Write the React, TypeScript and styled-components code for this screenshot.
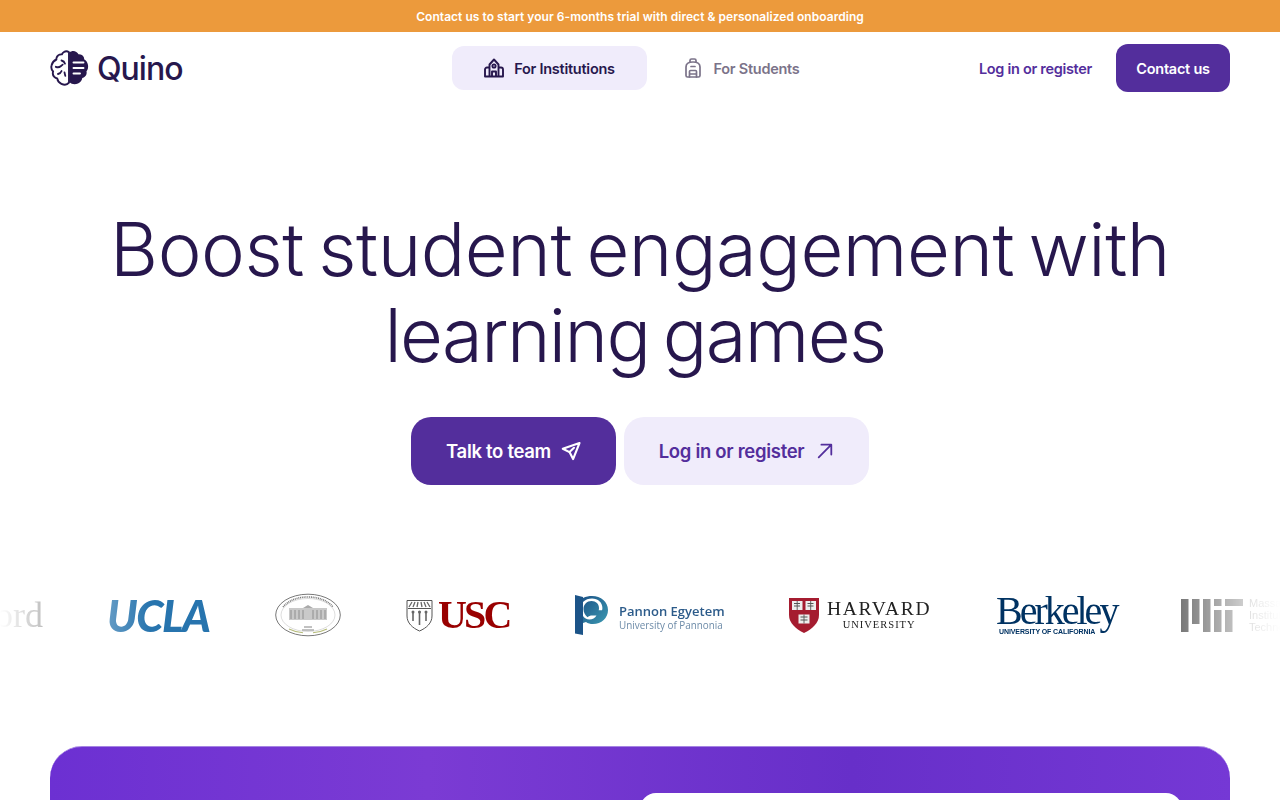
import React from "react";
import styled, { createGlobalStyle } from "styled-components";

const Global = createGlobalStyle`
  html, body { margin: 0; padding: 0; background: #fff; }
  body { font-family: "Inter", "Liberation Sans", sans-serif; }
  #root { height: 800px; overflow: hidden; }
`;

const Page = styled.div`
  width: 1280px;
  height: 800px;
  overflow: hidden;
  display: flex;
  flex-direction: column;
`;

const Banner = styled.div`
  height: 32px;
  flex: none;
  background: #ec9a3c;
  color: #fff;
  font-size: 12px;
  font-weight: 600;
  display: flex;
  align-items: center;
  justify-content: center;
  letter-spacing: 0.04px;
`;

const Nav = styled.nav`
  height: 72px;
  flex: none;
  padding: 0 50px;
  display: grid;
  grid-template-columns: 402px auto 1fr;
  align-items: center;
`;

const Brand = styled.div`
  display: flex;
  align-items: center;
  gap: 8px;
  color: #27174d;
  font-size: 32px;
  font-weight: 500;
  letter-spacing: -1px;
`;

const Tabs = styled.div`
  display: flex;
  margin-top: -1px;
`;

const Tab = styled.div<{ $active?: boolean }>`
  flex: none;
  width: ${(p) => (p.$active ? "195px" : "191px")};
  height: 44px;
  border-radius: 12px;
  display: flex;
  align-items: center;
  justify-content: center;
  gap: ${(p) => (p.$active ? "10px" : "12px")};
  padding-top: 1px;
  box-sizing: border-box;
  font-size: 14.5px;
  font-weight: 600;
  letter-spacing: -0.25px;
  background: ${(p) => (p.$active ? "#f0ecfb" : "transparent")};
  color: ${(p) => (p.$active ? "#27174d" : "#7b7389")};
`;

const NavRight = styled.div`
  display: flex;
  justify-content: flex-end;
  align-items: center;
  gap: 24px;
`;

const NavLink = styled.span`
  color: #532e9c;
  font-size: 14.5px;
  font-weight: 600;
  letter-spacing: -0.3px;
`;

const NavButton = styled.div`
  width: 114px;
  height: 48px;
  border-radius: 12px;
  background: #532e9c;
  color: #fff;
  font-size: 14.5px;
  font-weight: 600;
  letter-spacing: -0.25px;
  display: flex;
  align-items: center;
  justify-content: center;
`;

const Hero = styled.section`
  display: flex;
  flex-direction: column;
  align-items: center;
  padding-top: 102px;
`;

const Heading = styled.h1`
  margin: 0;
  width: 1180px;
  text-align: center;
  font-size: 74px;
  line-height: 86px;
  font-weight: 300;
  word-spacing: -6px;
  color: #27174d;
`;

const HeadingLine = styled.span<{ $tracking: number; $inset?: number }>`
  display: block;
  letter-spacing: ${(p) => p.$tracking}px;
  padding-right: ${(p) => p.$inset ?? 0}px;
`;

const Actions = styled.div`
  display: flex;
  gap: 8px;
  margin-top: 39px;
`;

const Action = styled.div<{ $primary?: boolean }>`
  height: 68px;
  width: ${(p) => (p.$primary ? "205px" : "245px")};
  border-radius: 20px;
  display: flex;
  align-items: center;
  justify-content: center;
  gap: ${(p) => (p.$primary ? "10px" : "12px")};
  font-size: 18.5px;
  font-weight: 600;
  letter-spacing: -0.3px;
  background: ${(p) => (p.$primary ? "#532e9c" : "#f0ecfb")};
  color: ${(p) => (p.$primary ? "#fff" : "#532e9c")};
`;

const LogoBand = styled.div`
  margin-top: 100px;
  height: 60px;
  flex: none;
  overflow: hidden;
  display: flex;
  align-items: center;
  -webkit-mask-image: linear-gradient(to right, transparent 0, #000 150px, #000 1130px, transparent 1280px);
  mask-image: linear-gradient(to right, transparent 0, #000 150px, #000 1130px, transparent 1280px);
`;

const LogoTrack = styled.div`
  display: flex;
  align-items: center;
  gap: 65px;
  margin-left: -97px;
  flex: none;
`;

const Logo = styled.div<{ $w: number }>`
  width: ${(p) => p.$w}px;
  flex: none;
  display: flex;
  align-items: center;
  white-space: nowrap;
  svg {
    flex: none;
  }
`;

const Stanford = styled.span`
  font-family: "Liberation Serif", serif;
  font-size: 36px;
  color: #222;
  width: 100%;
  text-align: right;
`;

const Ucla = styled.span`
  font-family: "Lato", sans-serif;
  font-size: 44px;
  font-weight: 900;
  font-style: italic;
  letter-spacing: -1.4px;
  color: #2774ae;
  line-height: 1;
  margin-left: -1px;
`;

const Usc = styled.span`
  font-family: "Liberation Serif", serif;
  font-size: 40px;
  font-weight: 700;
  letter-spacing: -2.8px;
  color: #990000;
  margin-left: 5px;
  line-height: 1;
`;

const PannonText = styled.div`
  display: flex;
  flex-direction: column;
  margin-left: 10px;
  margin-top: 6px;
  font-family: "Open Sans", sans-serif;
  line-height: 14px;
`;

const PannonName = styled.span`
  font-size: 13px;
  font-weight: 600;
  color: #2c5b8a;
`;

const PannonSub = styled.span`
  font-size: 9.9px;
  color: #6d8ba8;
`;

const HarvardText = styled.div`
  display: flex;
  flex-direction: column;
  align-items: center;
  margin-left: 8px;
  font-family: "Liberation Serif", serif;
  color: #222;
`;

const HarvardName = styled.span`
  font-size: 19.5px;
  line-height: 20px;
  letter-spacing: 1.7px;
`;

const HarvardSub = styled.span`
  font-size: 10.5px;
  line-height: 12px;
  letter-spacing: 1px;
`;

const BerkeleyStack = styled.div`
  display: flex;
  flex-direction: column;
  color: #003262;
`;

const BerkeleyName = styled.span`
  font-family: "Liberation Serif", serif;
  font-size: 40px;
  line-height: 32px;
  letter-spacing: -3px;
`;

const BerkeleySub = styled.span`
  font-family: "Liberation Sans", sans-serif;
  font-size: 7px;
  font-weight: 700;
  line-height: 9px;
  letter-spacing: -0.1px;
  margin-left: 3px;
`;

const MitText = styled.div`
  display: flex;
  flex-direction: column;
  margin-left: 6px;
  font-family: "Liberation Sans", sans-serif;
  font-size: 11px;
  line-height: 12px;
  color: #666;
`;

const Showcase = styled.section`
  margin: 101px 50px 0;
  flex: none;
  height: 300px;
  border-radius: 32px 32px 0 0;
  background: linear-gradient(90deg, #6c30d2 0%, #7b3bd4 32%, #672fc9 68%, #7538d5 100%);
  border-top: 1px solid #a584e2;
  display: flex;
  justify-content: flex-end;
  padding: 46px 48px 0 0;
`;

const ShowcasePanel = styled.div`
  width: 542px;
  height: 200px;
  background: #fff;
  border-radius: 16px;
`;

const BrainLogo = () => (
  <svg width="39" height="37" viewBox="0 0 39 37" fill="none">
    <path
      d="M19 2.200c-1.400-1-3.400-1.200-5-.2-1 .6-1.700 1.400-2.100 2.400-2.300-.2-4.400 1-5.200 3-.3.700-.4 1.400-.3 2.100C4 10.500 2.200 12.900 1.600 15.300c-.7 2.500 0 4.700 1.500 6.200-.6 2-.2 4 1.200 5.400.9.900 1.800 1.300 2.900 1.500.3 2.200 1.700 4.300 4.200 5.500 2.800 1.300 5.900.9 7.600-1.200V2.200Z"
      stroke="#27174d"
      strokeWidth="1.900"
      strokeLinejoin="round"
    />
    <path d="M11.500 10.500c1.800.4 3 1.500 3.500 3.200M5.800 16.800c2 .8 3.500.6 4.900-.6l2-1.600M8 24c1.800-.4 3-1.400 3.600-3M14.500 22.500l.8 3.400" stroke="#27174d" strokeWidth="1.800" strokeLinecap="round" />
    <path
      d="M19.500 2.500c1.600-1.500 4.700-2 6.800-.5 1 .7 1.600 1.200 2.100 2.200 2.500-.2 4.600 1 5.400 3 .3.700.4 1.400.3 2.100 2 1.100 3.500 3.300 3.900 5.700.4 2.500-.1 4.600-1.500 6.300.5 2-.1 4-1.500 5.300-.8.800-1.700 1.200-2.700 1.400-.4 2.300-1.800 4.400-4.300 5.500-2.800 1.300-6.500.9-8.500-1.200V2.500Z"
      fill="#27174d"
    />
    <path d="M23.500 12.500h10M23.500 18h10M23.500 23.500h6.500" stroke="#fff" strokeWidth="1.900" strokeLinecap="round" />
  </svg>
);

const SchoolIcon = () => (
  <svg width="20" height="20" viewBox="0 0 20 20" fill="none" stroke="currentColor" strokeWidth="1.900" strokeLinejoin="round">
    <path d="M5.500 18.500V6.500L10 1.500l4.500 5v12" />
    <path d="M5.500 9.500H3A2 2 0 0 0 1 11.500v7h18v-7a2 2 0 0 0-2-2h-2.500" />
    <circle cx="10" cy="8" r="1.600" />
    <path d="M8 18.500v-5h4v5" />
  </svg>
);

const BackpackIcon = () => (
  <svg width="16" height="20" viewBox="0 0 16 20" fill="none" stroke="currentColor" strokeWidth="1.700" strokeLinejoin="round" strokeLinecap="round">
    <path d="M1 9c0-3 2-5 7-5s7 2 7 5v8.500a1.500 1.500 0 0 1-1.500 1.500h-11A1.500 1.500 0 0 1 1 17.500V9Z" />
    <path d="M5 4V2.500A1.500 1.500 0 0 1 6.500 1h3A1.500 1.500 0 0 1 11 2.500V4" />
    <path d="M4.500 19v-5.500a1 1 0 0 1 1-1h5a1 1 0 0 1 1 1V19M4.500 16h7M6 8.500h4" />
  </svg>
);

const SendIcon = () => (
  <svg width="20" height="20" viewBox="0 0 20 20" fill="none" stroke="currentColor" strokeWidth="2.100" strokeLinejoin="round" strokeLinecap="round">
    <path d="M18.500 2 1.800 7.800l6.700 3.300 3.600 7L18.500 2Z" />
    <path d="M8.500 11.100 13 6.800" />
  </svg>
);

const ArrowIcon = () => (
  <svg width="18" height="18" viewBox="0 0 20 20" fill="none" stroke="currentColor" strokeWidth="2" strokeLinecap="round" strokeLinejoin="round">
    <path d="M3 17 17 3M6 3h11v11" />
  </svg>
);

const SealLogo = () => (
  <svg width="66" height="44" viewBox="0 0 66 44" fill="none">
    <ellipse cx="33" cy="22" rx="32.300" ry="20.800" fill="#fff" stroke="#555" strokeWidth="0.800" />
    <ellipse cx="33" cy="22" rx="27" ry="16.500" stroke="#bbb" strokeWidth="0.500" />
    <path d="M8 14c6-7 15-10 25-10s19 3 25 10" stroke="#777" strokeWidth="1.600" strokeDasharray="1 .8" />
    <path d="M14 15h38v12H14z" fill="#c9c9c9" />
    <path d="M16 17v9M20 17v9M24 17v9M28 17v9M38 17v9M42 17v9M46 17v9M50 17v9" stroke="#8e8e8e" strokeWidth="1" />
    <path d="M28 15l5-3 5 3z" fill="#aaa" />
    <path d="M14 36c5 2.500 10 3.500 14 3.800M52 36c-5 2.500-10 3.500-14 3.800" stroke="#b5bb7a" strokeWidth="1.100" />
    <path d="M29 34h8M27 37h12" stroke="#777" strokeWidth="0.900" />
  </svg>
);

const UscShield = () => (
  <svg width="27" height="33" viewBox="0 0 27 33" fill="none">
    <path d="M1 1.500h25v15.500c0 7-5.500 12-12.500 15C6.500 29 1 24 1 17V1.500Z" fill="#fff" stroke="#555" strokeWidth="1" />
    <path d="M2 9.500h23" stroke="#555" strokeWidth="1" />
    <path d="M3 8l3-5M7 8l2-5M11 8l1-5M16 8l-1-5M20 8l-2-5M24 8l-3-5" stroke="#666" strokeWidth="1.300" />
    <path d="M7 12v10M13.500 12v14M20 12v10" stroke="#666" strokeWidth="1.600" />
    <circle cx="7" cy="13" r="1.500" fill="#666" />
    <circle cx="13.500" cy="13" r="1.500" fill="#666" />
    <circle cx="20" cy="13" r="1.500" fill="#666" />
  </svg>
);

const PannonMark = () => (
  <svg width="35" height="40" viewBox="0 0 35 40" fill="none">
    <defs>
      <linearGradient id="pan" x1="0" y1="0" x2="1" y2="1">
        <stop offset="0" stopColor="#1c5488" />
        <stop offset="1" stopColor="#3c9ab2" />
      </linearGradient>
    </defs>
    <path d="M1 0l8 2v38l-8-1.500V0Z" fill="#1c5488" />
    <path d="M9 3C12 1.500 15 1 18 1c9 0 16 6 16 14s-6.500 14-15 14c-3 0-5-.6-7-2l-3 1v-7c1.500 2 3.500 3.500 6.500 3.500s5.500-1.500 7-4H18c-1.500 0-3.300.6-4.500 1.800C11 20 9.500 17.500 9.500 14c0-4.500 3.500-8 8-8s7.500 3 7.500 7c0 1-.1 1.500-.3 2.300h3.300c.3-.8.400-1.500.4-2.300C28.400 7.500 24 3.500 18 3.500c-3.500 0-6.500 1-9 3.500V3Z" fill="url(#pan)" />
  </svg>
);

const HarvardShield = () => (
  <svg width="30" height="35" viewBox="0 0 30 35" fill="none">
    <path d="M0 0h30v17c0 8-7 14-15 18C7 31 0 25 0 17V0Z" fill="#a51c30" />
    <path d="M3 3h10.500v9H3zM16.500 3H27v9H16.500zM9.500 16.500h11v9h-11z" fill="#eee" />
    <path d="M5 5.500h6M5 8h6M18.500 5.500h6M18.500 8h6M11.500 19h7M11.500 22h7" stroke="#555" strokeWidth="1.100" />
    <path d="M8.200 3v9M21.700 3v9M15 16.500v9" stroke="#555" strokeWidth="0.900" />
  </svg>
);

const MitMark = () => (
  <svg width="62" height="33" viewBox="0 0 62 33" fill="#333">
    <rect x="0" y="0" width="7.500" height="33" />
    <rect x="11" y="0" width="7.500" height="25" />
    <rect x="22" y="0" width="7.500" height="33" />
    <rect x="33" y="0" width="7.500" height="7" />
    <rect x="33" y="11" width="7.500" height="22" />
    <rect x="44" y="0" width="18" height="7" />
    <rect x="44" y="11" width="7.500" height="22" />
  </svg>
);

export default function App() {
  return (
    <Page>
      <Global />
      <Banner>Contact us to start your 6-months trial with direct &amp; personalized onboarding</Banner>
      <Nav>
        <Brand>
          <BrainLogo />
          Quino
        </Brand>
        <Tabs>
          <Tab $active>
            <SchoolIcon />
            For Institutions
          </Tab>
          <Tab>
            <BackpackIcon />
            For Students
          </Tab>
        </Tabs>
        <NavRight>
          <NavLink>Log in or register</NavLink>
          <NavButton>Contact us</NavButton>
        </NavRight>
      </Nav>
      <Hero>
        <Heading>
          <HeadingLine $tracking={-0.45}>Boost student engagement with</HeadingLine>
          <HeadingLine $tracking={-1.6} $inset={10}>learning games</HeadingLine>
        </Heading>
        <Actions>
          <Action $primary>
            Talk to team
            <SendIcon />
          </Action>
          <Action>
            Log in or register
            <ArrowIcon />
          </Action>
        </Actions>
      </Hero>
      <LogoBand>
        <LogoTrack>
          <Logo $w={140}>
            <Stanford>Stanford</Stanford>
          </Logo>
          <Logo $w={102}>
            <Ucla>UCLA</Ucla>
          </Logo>
          <Logo $w={66}>
            <SealLogo />
          </Logo>
          <Logo $w={103}>
            <UscShield />
            <Usc>USC</Usc>
          </Logo>
          <Logo $w={150}>
            <PannonMark />
            <PannonText>
              <PannonName>Pannon Egyetem</PannonName>
              <PannonSub>University of Pannonia</PannonSub>
            </PannonText>
          </Logo>
          <Logo $w={142}>
            <HarvardShield />
            <HarvardText>
              <HarvardName>HARVARD</HarvardName>
              <HarvardSub>UNIVERSITY</HarvardSub>
            </HarvardText>
          </Logo>
          <Logo $w={120}>
            <BerkeleyStack>
              <BerkeleyName>Berkeley</BerkeleyName>
              <BerkeleySub>UNIVERSITY OF CALIFORNIA</BerkeleySub>
            </BerkeleyStack>
          </Logo>
          <Logo $w={160}>
            <MitMark />
            <MitText>
              <span>Massachusetts</span>
              <span>Institute of</span>
              <span>Technology</span>
            </MitText>
          </Logo>
        </LogoTrack>
      </LogoBand>
      <Showcase>
        <ShowcasePanel />
      </Showcase>
    </Page>
  );
}
